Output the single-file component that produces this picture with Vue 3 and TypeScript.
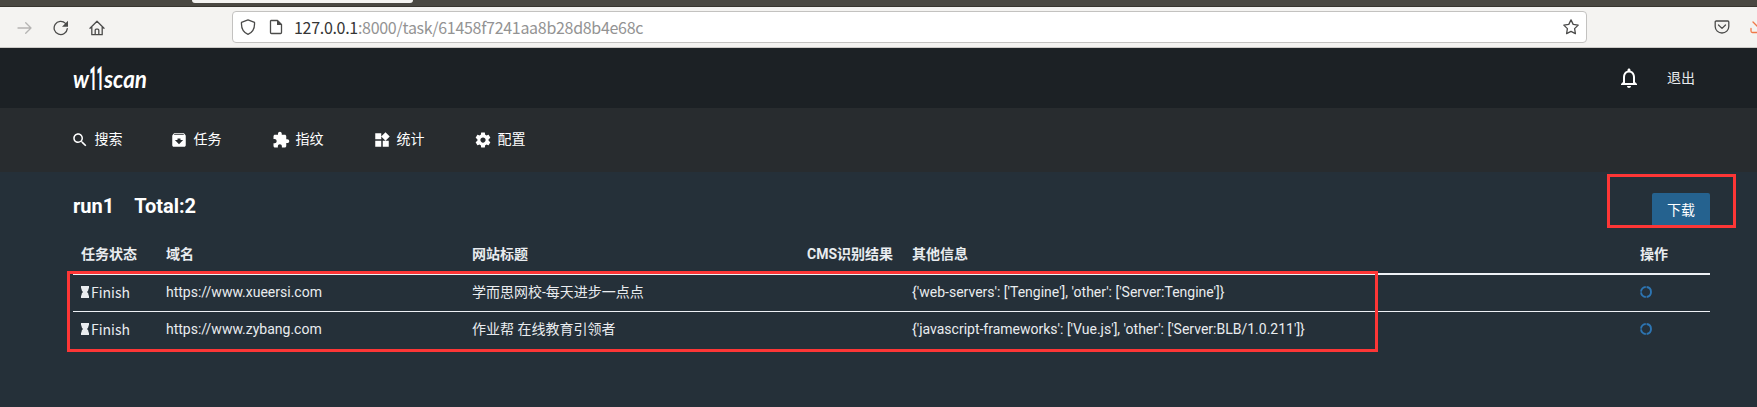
<script setup lang="ts">
interface NavItem {
  label: string
  icon: string
  width: number
}

interface TaskRow {
  url: string
  title: string
  cms: string
  info: string
}

const nav: NavItem[] = [
  { label: '搜索', width: 99, icon: 'M15.5 14h-.79l-.28-.27C15.41 12.59 16 11.11 16 9.5 16 5.91 13.09 3 9.5 3S3 5.91 3 9.5 5.91 16 9.5 16c1.61 0 3.09-.59 4.23-1.57l.27.28v.79l5 4.99L20.49 19l-4.99-5zm-6 0C7.01 14 5 11.99 5 9.5S7.01 5 9.5 5 14 7.01 14 9.5 11.99 14 9.5 14z' },
  { label: '任务', width: 102, icon: 'M20.54 5.23l-1.39-1.68C18.88 3.21 18.47 3 18 3H6c-.47 0-.88.21-1.16.55L3.46 5.23C3.17 5.57 3 6.02 3 6.5V19c0 1.1.9 2 2 2h14c1.1 0 2-.9 2-2V6.500c0-.48-.17-.93-.46-1.270zM12 17.500L6.500 12H10v-2h4v2h3.500L12 17.500zM5.120 5l.81-1h12l.94 1H5.120z' },
  { label: '指纹', width: 101, icon: 'M20.5 11H19V7c0-1.1-.9-2-2-2h-4V3.5C13 2.12 11.88 1 10.5 1S8 2.12 8 3.5V5H4c-1.1 0-1.99.9-1.99 2v3.8H3.5c1.49 0 2.7 1.21 2.7 2.7s-1.21 2.7-2.7 2.7H2V20c0 1.1.9 2 2 2h3.8v-1.5c0-1.49 1.21-2.7 2.7-2.7 1.49 0 2.7 1.21 2.7 2.7V22H17c1.1 0 2-.9 2-2v-4h1.5c1.38 0 2.5-1.12 2.5-2.5S21.88 11 20.5 11z' },
  { label: '统计', width: 101, icon: 'M13 13v8h8v-8h-8zM3 21h8v-8H3v8zM3 3v8h8V3H3zm13.66-1.31L11 7.34 16.66 13l5.66-5.66-5.66-5.65z' },
  { label: '配置', width: 101, icon: 'M19.43 12.98c.04-.32.07-.64.07-.98s-.03-.66-.07-.98l2.11-1.65c.19-.15.24-.42.12-.64l-2-3.46c-.12-.22-.39-.3-.61-.22l-2.49 1c-.52-.4-1.08-.73-1.69-.98l-.38-2.65C14.46 2.18 14.25 2 14 2h-4c-.25 0-.46.18-.49.42l-.38 2.65c-.61.25-1.17.59-1.69.98l-2.49-1c-.23-.09-.49 0-.61.22l-2 3.46c-.13.22-.07.49.12.64l2.11 1.65c-.04.32-.07.65-.07.98s.03.66.07.98l-2.11 1.65c-.19.15-.24.42-.12.64l2 3.46c.12.22.39.3.61.22l2.49-1c.52.4 1.08.73 1.69.98l.38 2.65c.03.24.24.42.49.42h4c.25 0 .46-.18.49-.42l.38-2.65c.61-.25 1.17-.59 1.69-.98l2.49 1c.23.09.49 0 .61-.22l2-3.46c.12-.22.07-.49-.12-.64l-2.11-1.65zM12 15.5c-1.93 0-3.5-1.57-3.5-3.5s1.57-3.5 3.5-3.5 3.5 1.57 3.5 3.5-1.57 3.5-3.5 3.5z' },
]

const columns: string[] = ['任务状态', '域名', '网站标题', 'CMS识别结果', '其他信息', '操作']

const rows: TaskRow[] = [
  { url: 'https://www.xueersi.com', title: '学而思网校-每天进步一点点', cms: '', info: "{'web-servers': ['Tengine'], 'other': ['Server:Tengine']}" },
  { url: 'https://www.zybang.com', title: '作业帮 在线教育引领者', cms: '', info: "{'javascript-frameworks': ['Vue.js'], 'other': ['Server:BLB/1.0.211']}" },
]
</script>

<template>
  <div class="screen">
    <div class="tabstrip"><div class="tab"></div></div>

    <div class="toolbar">
      <div class="tools">
        <svg class="forward" width="16" height="16" viewBox="0 0 16 16"><path d="M1 8h13M8.700 2.700 14 8l-5.300 5.300" /></svg>
        <svg width="16" height="16" viewBox="0 0 16 16"><path d="M14.300 8.600A6.600 6.600 0 1 1 12.500 3.400" /><path class="solid" d="M15 .8v6H9z" /></svg>
        <svg width="16" height="16" viewBox="0 0 16 16"><path d="M1 8.300 8 1.200l7 7.100M2.800 7v7.700h10.400V7M6.200 14.500v-4.300a1 1 0 0 1 1-1h1.600a1 1 0 0 1 1 1v4.300" /></svg>
      </div>
      <div class="address">
        <svg width="16" height="16" viewBox="0 0 16 16"><path d="M8 .9 14.500 3.300c.4 5.500-1.500 10-6.500 12.100C3 13.300 1.100 8.800 1.500 3.300z" /></svg>
        <svg width="16" height="16" viewBox="0 0 16 16"><path d="M3 1.500h6.500l4 4V13.500a1 1 0 0 1-1 1H3.500a1 1 0 0 1-1-1V2z" /><path class="solid" d="M9 1v5h5z" /></svg>
        <span class="url"><b>127.0.0.1</b>:8000/task/61458f7241aa8b28d8b4e68c</span>
        <svg class="star" width="16" height="16" viewBox="0 0 16 16"><path d="m8 .9 2.200 4.500 5 .7-3.600 3.500.8 5L8 12.300l-4.400 2.300.8-5L.8 6.100l5-.7z" /></svg>
      </div>
      <div class="extras">
        <svg width="16" height="16" viewBox="0 0 16 16"><path d="M2.200 2h11.600a1 1 0 0 1 1 1v4.500a6.800 6.500 0 0 1-13.600 0V3a1 1 0 0 1 1-1zM4.500 6 8 9.400 11.500 6" /></svg>
        <svg class="download" width="16" height="16" viewBox="0 0 16 16"><path d="M3 3l5 5 5-5M1 9.500V12a1.500 1.500 0 0 0 1.500 1.500h11" /></svg>
      </div>
    </div>

    <header class="header">
      <svg class="logo" width="90" height="60" viewBox="0 0 90 60">
        <text x="0" y="40" font-size="25" textLength="16" lengthAdjust="spacingAndGlyphs">w</text>
        <text class="tall" x="16.500" y="42" font-size="34" textLength="14" lengthAdjust="spacingAndGlyphs">11</text>
        <text x="31" y="40" font-size="25" textLength="43" lengthAdjust="spacingAndGlyphs">scan</text>
      </svg>
      <div class="account">
        <svg width="24" height="24" viewBox="0 0 24 24"><path d="M12 22c1.100 0 2-.9 2-2h-4c0 1.100.9 2 2 2zm6-6v-5c0-3.070-1.630-5.640-4.500-6.320V4c0-.83-.67-1.500-1.500-1.500s-1.500.67-1.500 1.500v.68C7.640 5.360 6 7.920 6 11v5l-2 2v1h16v-1l-2-2zm-2 1H8v-6c0-2.480 1.510-4.500 4-4.500s4 2.020 4 4.500v6z" /></svg>
        <span>退出</span>
      </div>
    </header>

    <nav class="nav">
      <a v-for="item in nav" :key="item.label" class="nav-item" :style="{ width: item.width + 'px' }">
        <svg width="18" height="18" viewBox="0 0 24 24"><path :d="item.icon" /></svg>
        <span>{{ item.label }}</span>
      </a>
    </nav>

    <main class="content">
      <div class="heading">
        <h4><span>run1</span><span>Total:2</span></h4>
        <button class="export">下载</button>
      </div>
      <div class="table">
        <div class="row head"><div v-for="c in columns" :key="c">{{ c }}</div></div>
        <div v-for="row in rows" :key="row.url" class="row">
          <div class="status">
            <svg width="8" height="12" viewBox="0 0 8 12"><path d="M0 0h8v2.500H7.500C7.500 4.300 7 5.200 6 6c1 .8 1.500 1.700 1.500 3.500H8V12H0V9.500h.5C.5 7.700 1 6.800 2 6 1 5.200.5 4.300.5 2.500H0z" /></svg>
            <span>Finish</span>
          </div>
          <div>{{ row.url }}</div>
          <div>{{ row.title }}</div>
          <div>{{ row.cms }}</div>
          <div>{{ row.info }}</div>
          <div class="action"><svg width="12" height="12" viewBox="0 0 12 12"><circle cx="6" cy="6" r="5" /></svg></div>
        </div>
      </div>
    </main>

    <div class="mark mark-export"></div>
    <div class="mark mark-rows"></div>
  </div>
</template>

<style>
body {
  margin: 0;
  overflow: hidden;
}
</style>

<style scoped>
* {
  box-sizing: border-box;
}
.screen {
  position: relative;
  width: 1757px;
  height: 407px;
  overflow: hidden;
  background: #253039;
  color: #e9ecef;
  font: 14px/20px Roboto, "Noto Sans CJK SC", sans-serif;
}
svg {
  display: block;
  flex: none;
}
.tabstrip {
  height: 7px;
  padding-left: 192px;
  background: #4a4842;
  border-bottom: 1px solid #38352f;
}
.tab {
  width: 221px;
  height: 3px;
  background: #f4f3f1;
  border-radius: 0 0 3px 3px;
}
.toolbar {
  display: flex;
  height: 41px;
  padding-top: 4px;
  background: #f4f3f1;
  border-bottom: 1px solid #cccac7;
}
.toolbar svg {
  fill: none;
  stroke: #4b4b4a;
  stroke-width: 1.3;
  stroke-linejoin: round;
  stroke-linecap: round;
}
.toolbar svg .solid {
  fill: #4b4b4a;
  stroke: none;
}
.toolbar svg.forward {
  stroke: #b5b4b3;
}
.toolbar svg.download {
  stroke: #f07848;
}
.tools {
  display: flex;
  flex: none;
  gap: 20px;
  width: 232px;
  padding: 9px 0 0 17px;
}
.address {
  display: flex;
  flex: none;
  align-items: center;
  gap: 12px;
  width: 1355px;
  height: 32px;
  padding: 0 7px;
  background: #fff;
  border: 1px solid #c3c2c0;
  border-radius: 4px;
}
.url {
  margin-left: -2px;
  color: #939393;
  font: 16px/30px "Noto Sans CJK SC", sans-serif;
  letter-spacing: -0.3px;
}
.url b {
  color: #353535;
  font-weight: 400;
}
.star {
  margin-left: auto;
}
.extras {
  display: flex;
  flex: none;
  gap: 20px;
  padding: 8px 0 0 127px;
}
.header {
  display: flex;
  justify-content: space-between;
  height: 60px;
  padding: 0 62px 0 73px;
  background: #1c2125;
}
.logo {
  fill: #fff;
  font-family: Lato, sans-serif;
  font-style: italic;
  font-weight: 700;
}
.logo .tall {
  font-family: Roboto, sans-serif;
  font-style: normal;
  font-weight: 900;
}
.account {
  display: flex;
  align-items: center;
  gap: 26px;
  height: 60px;
}
.account svg {
  fill: #fff;
}
.nav {
  display: flex;
  height: 64px;
  padding: 22px 0 0 70.5px;
  background: #282c2f;
  color: #fff;
}
.nav-item {
  display: flex;
  gap: 6px;
  height: 20px;
}
.nav-item span {
  margin-top: -1px;
}
.nav-item svg {
  margin-top: 1px;
  fill: #fff;
}
.content {
  padding: 21px 47px 0 73px;
}
.heading {
  display: flex;
  justify-content: space-between;
  height: 43px;
}
h4 {
  display: flex;
  gap: 20px;
  margin: 1px 0 0;
  color: #fff;
  font-size: 20px;
  font-weight: 700;
  line-height: 24px;
}
.export {
  width: 58px;
  height: 34px;
  padding: 0;
  background: #25628f;
  color: #fff;
  border: 0;
  border-radius: 2px;
  font: inherit;
}
.row {
  display: grid;
  grid-template-columns: 85px 306px 335px 105px 728px 78px;
  height: 37px;
  padding-bottom: 2px;
  align-items: center;
  border-top: 1px solid #eef1f6;
}
.row > div {
  padding-left: 8px;
  white-space: nowrap;
}
.row.head {
  height: 37px;
  border-top: 0;
  font-weight: 700;
}
.row.head + .row {
  height: 38px;
  border-top-width: 2px;
}
.status {
  display: flex;
  align-items: center;
  gap: 2px;
  font-family: "Noto Sans CJK SC", sans-serif;
}
.status svg {
  fill: #e9ecef;
}
.action circle {
  fill: none;
  stroke: #2d75b3;
  stroke-width: 1.9;
  stroke-dasharray: 7 0.854;
}
.mark {
  position: absolute;
  border: 3px solid #fd3636;
}
.mark-export {
  left: 1607px;
  top: 174px;
  width: 129px;
  height: 54px;
}
.mark-rows {
  left: 67px;
  top: 271px;
  width: 1311px;
  height: 81px;
}
</style>
